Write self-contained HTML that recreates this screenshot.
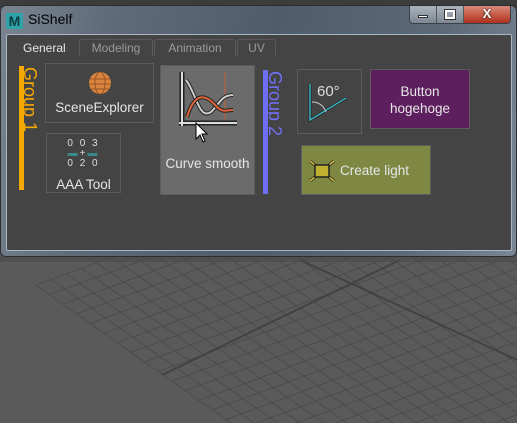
<!DOCTYPE html><html><head><style>
*{margin:0;padding:0;box-sizing:border-box}
body{width:517px;height:423px;overflow:hidden;background:#5a5a5a;font-family:"Liberation Sans","DejaVu Sans",sans-serif;position:relative}
.a{position:absolute}
.btn{position:absolute;border:1px solid #5c5c5c;color:#e6e6e6;font-size:13.5px;text-align:center}
</style></head><body>
<svg class="a" style="left:0;top:250px" width="517" height="173">
<defs>
<pattern id="g" width="16" height="16" patternUnits="userSpaceOnUse" patternTransform="matrix(0.85,0.6,0.95,-0.35,35,35)">
<path d="M0 0 H16 M0 0 V16" stroke="#464646" stroke-width="1.6" fill="none"/>
</pattern>
<clipPath id="c"><polygon points="35,35 130,0 517,0 517,173 230,173"/></clipPath>
</defs>
<rect x="0" y="0" width="517" height="173" fill="url(#g)" clip-path="url(#c)"/>
<path d="M162 125 L400 10" stroke="#424242" stroke-width="2"/>
<path d="M300 10 L517 110" stroke="#424242" stroke-width="2"/>
<rect x="0" y="0" width="517" height="12" fill="#4a4a4a" opacity="0.6"/>
</svg>
<div class="a" style="left:0;top:0;width:517px;height:8px;background:#3c3c3c"></div>
<div class="a" style="left:0;top:5px;width:517px;height:252px;border-radius:6px;background:linear-gradient(100deg,#7a8591 0%,#5f6b78 20%,#4f5c6a 50%,#5c6976 80%,#7a8693 100%);border:1px solid #2a2f35"></div>
<div class="a" style="left:6px;top:13px;width:17px;height:16px;background:#2fa3a8;color:#0a3d44;font-weight:bold;font-size:14px;line-height:16px;text-align:center">M</div>
<div class="a" style="left:28px;top:11px;font-size:14px;color:#000">SiShelf</div>
<div class="a" style="left:409px;top:6px;width:102px;height:18px;border:1px solid #3a4048;border-top:none;border-radius:0 0 4px 4px;display:flex;overflow:hidden">
<div style="width:27px;background:linear-gradient(#aab3bc,#7e8893);border-right:1px solid #555"><div style="margin:9px 8px;height:3px;background:#fff;border:1px solid #333"></div></div>
<div style="width:27px;background:linear-gradient(#aab3bc,#7e8893);border-right:1px solid #555"><div style="margin:4px 8px;height:9px;border:2px solid #fff;outline:1px solid #333"></div></div>
<div style="flex:1;background:linear-gradient(#d98a78,#b0301c);color:#fff;font-weight:bold;font-size:13px;text-align:center;line-height:16px;text-shadow:0 0 2px #000">X</div>
</div>
<div class="a" style="left:6px;top:34px;width:506px;height:217px;background:#444;border:1px solid #aab6c2;border-radius:2px"></div>
<div class="a" style="left:23px;top:41px;font-size:12px;color:#e6e6e6">General</div>
<div class="a" style="left:79px;top:39px;width:74px;height:17px;border:1px solid #5a5a5a;border-bottom:none;border-radius:3px 3px 0 0;font-size:12px;color:#9a9a9a;text-align:center;line-height:16px">Modeling</div>
<div class="a" style="left:154px;top:39px;width:82px;height:17px;border:1px solid #5a5a5a;border-bottom:none;border-radius:3px 3px 0 0;font-size:12px;color:#9a9a9a;text-align:center;line-height:16px">Animation</div>
<div class="a" style="left:237px;top:39px;width:39px;height:17px;border:1px solid #5a5a5a;border-bottom:none;border-radius:3px 3px 0 0;font-size:12px;color:#9a9a9a;text-align:center;line-height:16px">UV</div>
<div class="a" style="left:19px;top:66px;width:5px;height:124px;background:#f5a800"></div>
<div class="a" style="left:40px;top:67px;transform-origin:0 0;transform:rotate(90deg);font-size:18px;color:#f5a800;white-space:nowrap">Group 1</div>
<div class="btn" style="left:45px;top:63px;width:109px;height:60px"><svg style="display:block;margin:7px auto 0" width="24" height="24" viewBox="0 0 24 24"><circle cx="12" cy="12" r="11" fill="#d9853f"/><g stroke="#9a5420" stroke-width="1" fill="none"><ellipse cx="12" cy="12" rx="5" ry="11"/><path d="M2 8 H22 M1 13 H23 M3 18 H21"/></g></svg><div style="margin-top:5px">SceneExplorer</div></div>
<div class="btn" style="left:46px;top:133px;width:75px;height:60px"><div style="font-size:10px;line-height:10px;margin-top:5px;color:#ddd;letter-spacing:2px">0 0 3<br><span style="color:#3a8a8a">▬</span>+<span style="color:#3a8a8a">▬</span><br>0 2 0</div><div style="margin-top:8px">AAA Tool</div></div>
<div class="btn" style="left:160px;top:65px;width:95px;height:130px;background:#6b6b6b">
<svg class="a" style="left:16px;top:4px" width="62" height="60" viewBox="0 0 62 60">
<line x1="48" y1="2" x2="48" y2="56" stroke="#c0603a" stroke-width="1"/>
<path d="M5 2 V56 M2 53 H60" stroke="#222" stroke-width="5" fill="none"/>
<path d="M5 2 V56 M2 53 H60" stroke="#ddd" stroke-width="2" fill="none"/>
<path d="M9 10 C20 25 22 50 34 42 C42 35 44 25 56 25" stroke="#222" stroke-width="4" fill="none"/>
<path d="M9 10 C20 25 22 50 34 42 C42 35 44 25 56 25" stroke="#ccc" stroke-width="2" fill="none"/>
<path d="M10 47 C18 20 30 25 40 37 C46 43 50 40 56 40" stroke="#222" stroke-width="4" fill="none"/>
<path d="M10 47 C18 20 30 25 40 37 C46 43 50 40 56 40" stroke="#e0643a" stroke-width="2" fill="none"/>
</svg>
<svg class="a" style="left:34px;top:56px" width="14" height="22"><path d="M1 1 V17 L5 13 L8 20 L10 19 L7 12 L12 12 Z" fill="#fff" stroke="#000"/></svg>
<div style="position:absolute;top:90px;width:100%">Curve smooth</div></div>
<div class="a" style="left:263px;top:70px;width:5px;height:124px;background:#6e6ef5"></div>
<div class="a" style="left:285px;top:71px;transform-origin:0 0;transform:rotate(90deg);font-size:18px;color:#7070f5;white-space:nowrap">Group 2</div>
<div class="btn" style="left:297px;top:69px;width:65px;height:65px">
<svg class="a" style="left:10px;top:10px" width="40" height="44"><path d="M2 4 V40 L38 18" stroke="#222" stroke-width="3" fill="none"/><path d="M2 4 V40 L38 18" stroke="#3ab0c0" stroke-width="1.5" fill="none"/><path d="M4 22 Q14 22 18 32" stroke="#ccc" fill="none"/><text x="9" y="16" fill="#ddd" font-size="15" font-family="Liberation Sans">60°</text></svg></div>
<div class="btn" style="left:370px;top:69px;width:100px;height:60px;background:#5e1f5e;padding-top:13px;line-height:17px">Button<br>hogehoge</div>
<div class="btn" style="left:301px;top:145px;width:130px;height:50px;background:#7e8842">
<svg class="a" style="left:5px;top:12px" width="30" height="26"><g stroke="#222" stroke-width="3"><line x1="3" y1="3" x2="9" y2="8"/><line x1="27" y1="3" x2="21" y2="8"/><line x1="3" y1="23" x2="9" y2="18"/><line x1="27" y1="23" x2="21" y2="18"/></g><g stroke="#d8c040" stroke-width="1.5"><line x1="3" y1="3" x2="9" y2="8"/><line x1="27" y1="3" x2="21" y2="8"/><line x1="3" y1="23" x2="9" y2="18"/><line x1="27" y1="23" x2="21" y2="18"/></g><rect x="8" y="7" width="14" height="12" fill="#c0b030" stroke="#222" stroke-width="1.5"/></svg>
<div style="position:absolute;left:38px;top:17px">Create light</div></div>
</body></html>
